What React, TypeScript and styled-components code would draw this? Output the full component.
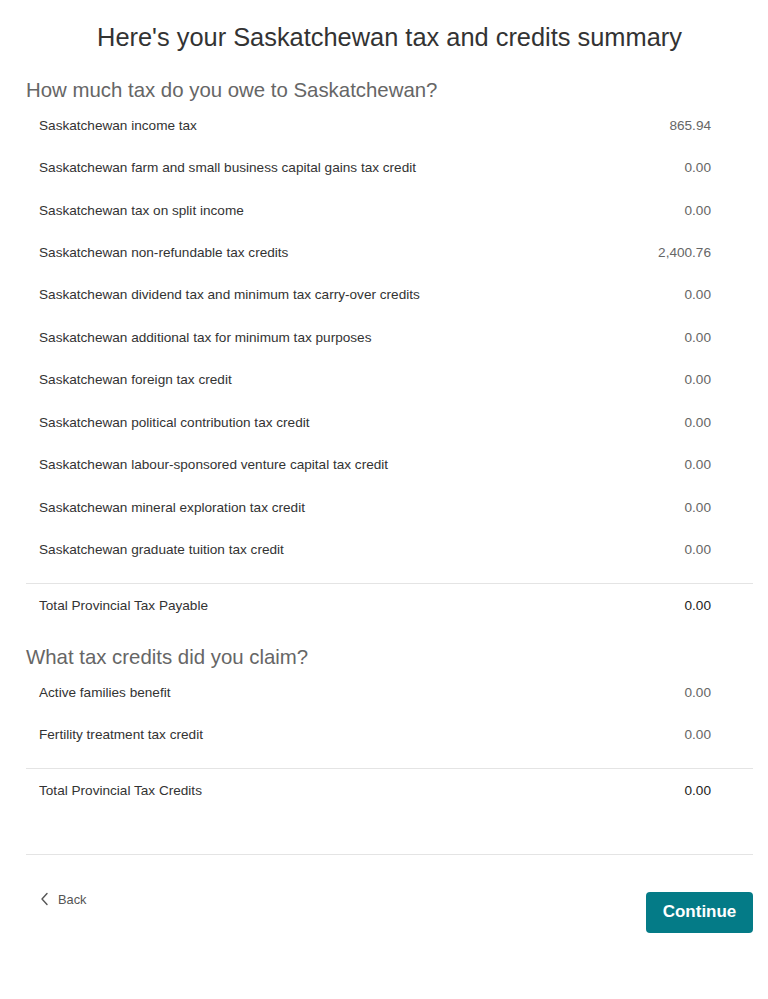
import * as React from 'react';
import styled, { createGlobalStyle } from 'styled-components';

const GlobalStyle = createGlobalStyle`
  body {
    margin: 0;
    background: #fff;
    font-family: "Liberation Sans", Arial, sans-serif;
  }
`;

const dividerColor = '#e4e4e4';

const Page = styled.div`
  width: 768px;
  box-sizing: border-box;
  padding: 23px 15px 60px 26px;
`;

const Title = styled.h1`
  margin: 0 0 26px;
  font-size: 25.4px;
  line-height: 28px;
  font-weight: 400;
  color: #333;
  text-align: center;
`;

const SectionHeading = styled.h2<{ $top?: number }>`
  margin: ${props => props.$top || 0}px 0 0;
  font-size: 20.4px;
  line-height: 27px;
  font-weight: 400;
  color: #666;
`;

const Row = styled.div`
  display: flex;
  justify-content: space-between;
  align-items: center;
  height: 42.45px;
  padding: 0 42px 0 13px;
  font-size: 13.6px;
  color: #333;
`;

const Value = styled.span<{ $strong?: boolean }>`
  color: ${props => (props.$strong ? '#222' : '#666')};
`;

const Divider = styled.hr<{ $top: number }>`
  margin: ${props => props.$top}px 0 0;
  border: 0;
  border-top: 1px solid ${dividerColor};
`;

const Footer = styled.div`
  display: flex;
  justify-content: space-between;
  align-items: flex-start;
  margin-top: 37px;
`;

const BackLink = styled.a`
  display: flex;
  align-items: center;
  gap: 9px;
  margin: 0 0 0 14px;
  font-size: 12.8px;
  color: #555;
  cursor: pointer;
`;

const ContinueButton = styled.button`
  width: 107px;
  height: 41px;
  border: 0;
  border-radius: 4px;
  background: #047b87;
  color: #fff;
  font-family: "Liberation Sans", Arial, sans-serif;
  font-size: 17px;
  font-weight: 700;
  cursor: pointer;
`;

const owed: [string, string][] = [
  ['Saskatchewan income tax', '865.94'],
  ['Saskatchewan farm and small business capital gains tax credit', '0.00'],
  ['Saskatchewan tax on split income', '0.00'],
  ['Saskatchewan non-refundable tax credits', '2,400.76'],
  ['Saskatchewan dividend tax and minimum tax carry-over credits', '0.00'],
  ['Saskatchewan additional tax for minimum tax purposes', '0.00'],
  ['Saskatchewan foreign tax credit', '0.00'],
  ['Saskatchewan political contribution tax credit', '0.00'],
  ['Saskatchewan labour-sponsored venture capital tax credit', '0.00'],
  ['Saskatchewan mineral exploration tax credit', '0.00'],
  ['Saskatchewan graduate tuition tax credit', '0.00'],
];

const credits: [string, string][] = [
  ['Active families benefit', '0.00'],
  ['Fertility treatment tax credit', '0.00'],
];

const ChevronLeft = () => (
  <svg width="9" height="14" viewBox="0 0 9 14" fill="none">
    <path d="M7 1.5 2 7l5 5.5" stroke="#555" strokeWidth="1.4" strokeLinecap="round" strokeLinejoin="round" />
  </svg>
);

const App = () => (
  <>
    <GlobalStyle />
    <Page>
      <Title>Here's your Saskatchewan tax and credits summary</Title>

      <SectionHeading>How much tax do you owe to Saskatchewan?</SectionHeading>
      {owed.map(([label, value]) => (
        <Row key={label}>
          <span>{label}</span>
          <Value>{value}</Value>
        </Row>
      ))}
      <Divider $top={12} />
      <Row>
        <span>Total Provincial Tax Payable</span>
        <Value $strong>0.00</Value>
      </Row>

      <SectionHeading $top={18}>What tax credits did you claim?</SectionHeading>
      {credits.map(([label, value]) => (
        <Row key={label}>
          <span>{label}</span>
          <Value>{value}</Value>
        </Row>
      ))}
      <Divider $top={12} />
      <Row>
        <span>Total Provincial Tax Credits</span>
        <Value $strong>0.00</Value>
      </Row>
      <Divider $top={42} />

      <Footer>
        <BackLink>
          <ChevronLeft />
          Back
        </BackLink>
        <ContinueButton>Continue</ContinueButton>
      </Footer>
    </Page>
  </>
);

export default App;
